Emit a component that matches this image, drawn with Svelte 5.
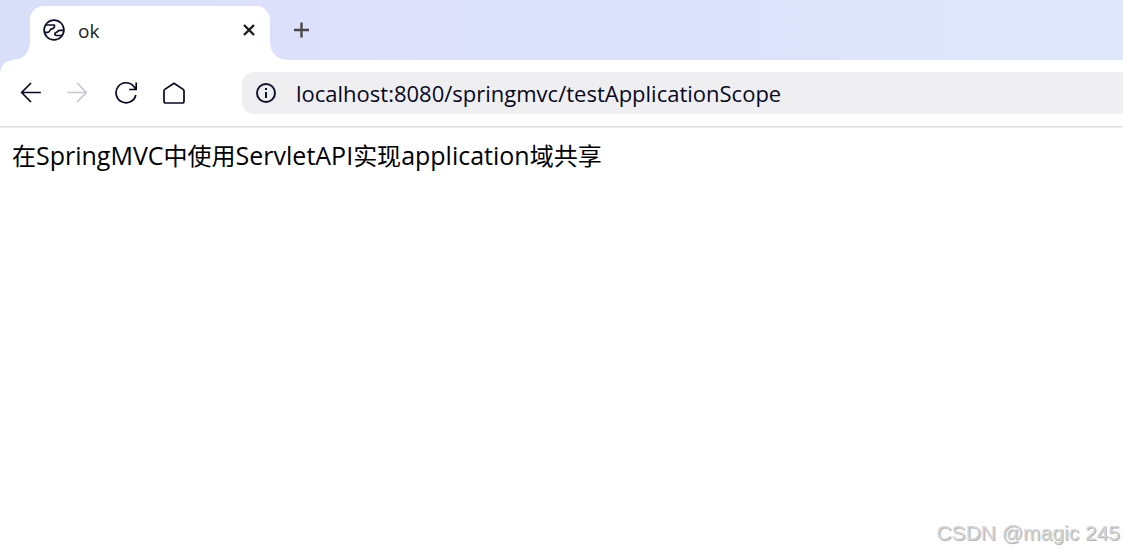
<script>
  let address = $state('localhost:8080/springmvc/testApplicationScope');
</script>

<div class="browser">
  <header class="tabs">
    <div class="tab">
      <svg class="favicon" viewBox="0 0 22 22" width="22" height="22" aria-hidden="true">
        <circle cx="11" cy="11" r="9.9" />
        <path d="M2.5 6H11.4V8.2L10 9.6C9 10.2 8 9.7 7.4 10.6C6.7 11.7 6.5 13.4 4.8 13.4H1.6" />
        <path d="M20.6 11.4H16.8C14.8 11.4 14.8 12.8 13.6 13.2L12.6 13.7C11.3 14.5 11.7 16.5 13.2 16.5H19" />
      </svg>
      <span class="title">ok</span>
      <button class="close" aria-label="Close tab">
        <svg viewBox="0 0 14 14" width="14" height="14"><path d="M2 2L12 12M12 2L2 12" /></svg>
      </button>
    </div>
    <button class="new" aria-label="New tab">
      <svg viewBox="0 0 16 16" width="16" height="16"><path d="M8.5 0.5V15.5M1 8H16" /></svg>
    </button>
  </header>

  <nav class="toolbar">
    <div class="controls">
      <button aria-label="Back">
        <svg viewBox="0 0 24 24" width="24" height="24"><path d="M21.8 11.5H2.5M12 2L2.6 11.5L12 21" /></svg>
      </button>
      <button aria-label="Forward" disabled>
        <svg viewBox="0 0 24 24" width="24" height="24"><path d="M0.5 11.5H19.5M10.2 2L19.4 11.5L10.2 21" /></svg>
      </button>
      <button aria-label="Reload">
        <svg viewBox="0 0 24 24" width="24" height="24"><path d="M20.8 14A10 10 0 1 1 18.6 5.2L21 8.2M21.2 1.5V8.5H14.2" /></svg>
      </button>
      <button aria-label="Home">
        <svg viewBox="0 0 24 24" width="24" height="24"><path d="M11 2.3L20.2 8.4Q21 9 21 9.9V20.3Q21 22 19.3 22H2.7Q1 22 1 20.3V9.9Q1 9 1.8 8.4Z" /></svg>
      </button>
    </div>
    <label class="address">
      <svg viewBox="0 0 20 20" width="20" height="20" aria-hidden="true">
        <circle cx="10" cy="10" r="9" />
        <path d="M10 9V15M10 5V7" />
      </svg>
      <input type="text" aria-label="Address" spellcheck="false" bind:value={address} />
    </label>
  </nav>

  <main>
    <p>在<span>SpringMVC</span>中使用<span>ServletAPI</span>实现<span>application</span>域共享</p>
  </main>
  <footer>CSDN @magic 245</footer>
</div>

<style>
  :global(body) {
    margin: 0;
  }

  .browser {
    display: flex;
    flex-direction: column;
    min-height: 100vh;
    overflow: hidden;
    background: #fff;
    font-family: "Open Sans", "Noto Sans CJK SC", sans-serif;
  }

  button {
    display: grid;
    place-items: center;
    padding: 0;
    border: 0;
    background: none;
    color: #060822;
  }

  svg {
    flex: none;
    fill: none;
    stroke: currentColor;
    stroke-width: 1.7;
    stroke-linejoin: round;
  }

  .tabs {
    display: flex;
    align-items: flex-end;
    height: 60px;
    padding-left: 30px;
    background: linear-gradient(90deg, #dadff9, #dde1fc 35%, #dce4fb 65%, #dfe8fa);
  }

  .tab {
    position: relative;
    display: flex;
    align-items: center;
    box-sizing: border-box;
    width: 240px;
    height: 54px;
    padding: 0 12px 6px 13px;
    border-radius: 14px 14px 0 0;
    background: #fff;
  }

  .tab::before,
  .tab::after {
    content: "";
    position: absolute;
    bottom: 0;
    width: 16px;
    height: 16px;
  }

  .tab::before {
    right: 100%;
    background: radial-gradient(circle at 0 0, transparent 15px, #fff 16px);
  }

  .tab::after {
    left: 100%;
    background: radial-gradient(circle at 100% 0, transparent 15px, #fff 16px);
  }

  .favicon {
    color: #0b0d2c;
  }

  .title {
    flex: 1;
    margin-left: 13px;
    padding-top: 2px;
    color: #222;
    font-size: 19px;
    line-height: 24px;
  }

  .close {
    width: 18px;
    height: 24px;
    color: #1b1b1b;
  }

  .close svg {
    stroke-width: 2.4;
  }

  .new {
    width: 32px;
    height: 60px;
    margin-left: 15px;
    color: #484848;
  }

  .new svg {
    stroke-width: 2.4;
  }

  .toolbar {
    position: relative;
    display: flex;
    align-items: center;
    height: 66px;
    border-bottom: 1px solid #dedee2;
    box-shadow: 0 1px 0 #f0f0f2;
    background: #fff;
  }

  .toolbar::before {
    content: "";
    position: absolute;
    top: 0;
    left: 0;
    width: 12px;
    height: 12px;
    background: radial-gradient(circle at 100% 100%, transparent 11px, #dadff9 12px);
  }

  .controls {
    display: flex;
    gap: 24px;
    width: 223px;
    padding-left: 19px;
  }

  .address {
    display: flex;
    flex: 1;
    align-items: center;
    gap: 20px;
    height: 42px;
    padding-left: 14px;
    border-radius: 12px 0 0 12px;
    background: #efeff1;
    color: #10122c;
  }

  .address svg {
    stroke-width: 2;
  }

  input {
    flex: 1;
    min-width: 0;
    padding: 0;
    border: 0;
    outline: 0;
    background: none;
    color: #060822;
    font-family: inherit;
    font-size: 22px;
    line-height: 32px;
  }

  button:disabled {
    color: #c7c7ce;
  }

  main {
    flex: 1;
    padding: 11px 12px;
  }

  p {
    margin: 0;
    color: #000;
    font-size: 24px;
    line-height: 34px;
  }

  p span {
    font-size: 25px;
  }

  footer {
    padding: 0 3px 6px;
    color: #d4d4d4;
    font-family: "Liberation Sans", Arial, sans-serif;
    font-size: 21px;
    line-height: 28px;
    text-align: right;
    text-shadow: 1px 1px 0 #b4b4b4;
  }
</style>
